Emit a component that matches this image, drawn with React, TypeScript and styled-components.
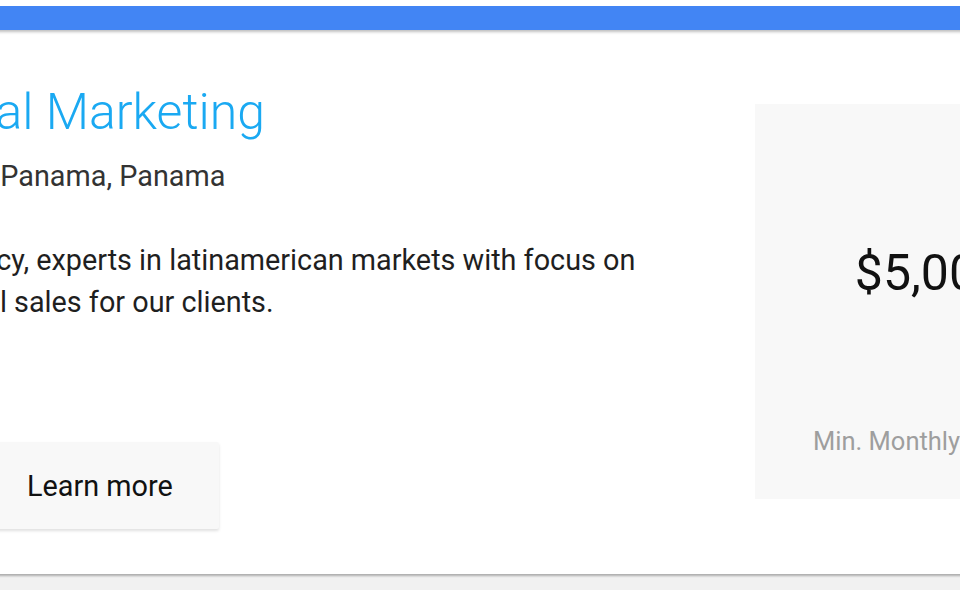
import React from "react";
import styled, { createGlobalStyle } from "styled-components";

const Global = createGlobalStyle`
  html, body { margin: 0; padding: 0; background: #f1f1f1; overflow: hidden; }
  body { font-family: Roboto, "Liberation Sans", Arial, sans-serif; }
`;

const Viewport = styled.div`
  width: 960px;
  height: 590px;
  overflow: hidden;
  background: #f1f1f1;
  display: flex;
  flex-direction: column;
`;

const TopStrip = styled.div`
  height: 6px;
  background: #ffffff;
  flex: none;
`;

const Card = styled.section`
  flex: none;
  height: 568px;
  margin-left: -341px;
  width: 1500px;
  background: #ffffff;
  border-top: 24px solid #4285f4;
  box-sizing: border-box;
  box-shadow: inset 0 3px 3px -1px rgba(0, 0, 0, 0.25), 0 2px 2px rgba(0, 0, 0, 0.28);
  display: flex;
  align-items: flex-start;
`;

const Main = styled.div`
  width: 1096px;
  flex: none;
  display: flex;
  flex-direction: column;
  padding-left: 50px;
  box-sizing: border-box;
`;

const Title = styled.h1`
  margin: 50px 0 0;
  font-size: 50px;
  line-height: 64px;
  font-weight: 300;
  color: #1aa9f2;
  white-space: nowrap;
`;

const Location = styled.div`
  margin-top: 14px;
  font-size: 28.8px;
  line-height: 36px;
  color: #333333;
  white-space: nowrap;
`;

const Description = styled.p`
  margin: 45px 0 0;
  font-size: 28.8px;
  line-height: 42px;
  color: #1f1f1f;
  white-space: nowrap;
`;

const LearnButton = styled.button`
  align-self: flex-start;
  margin: 119px 0 0 272px;
  height: 87px;
  padding: 0 46px;
  border: none;
  border-radius: 2px;
  background: #f8f8f8;
  font-family: Roboto, "Liberation Sans", Arial, sans-serif;
  font-size: 28.8px;
  color: #111111;
  box-shadow: 0 2px 3px rgba(0, 0, 0, 0.12);
  cursor: pointer;
`;

const PricePanel = styled.aside`
  margin-top: 74px;
  width: 350px;
  height: 395px;
  flex: none;
  background: #f8f8f8;
  display: flex;
  flex-direction: column;
  align-items: center;
`;

const Price = styled.div`
  margin-top: 141px;
  font-size: 50px;
  line-height: 56px;
  color: #111111;
`;

const PriceLabel = styled.div`
  margin-top: 122px;
  font-size: 25.5px;
  line-height: 36px;
  color: #9e9e9e;
`;

export default function App() {
  return (
    <>
      <Global />
      <Viewport>
        <TopStrip />
        <Card>
          <Main>
            <Title>Tropical Digital Marketing</Title>
            <Location>Vía España, Ciudad de Panama, Panama</Location>
            <Description>
              Digital marketing agency, experts in latinamerican markets with focus on
              <br />
              maximizing their digital sales for our clients.
            </Description>
            <LearnButton>Learn more</LearnButton>
          </Main>
          <PricePanel>
            <Price>$5,000</Price>
            <PriceLabel>Min. Monthly Budget</PriceLabel>
          </PricePanel>
        </Card>
      </Viewport>
    </>
  );
}
